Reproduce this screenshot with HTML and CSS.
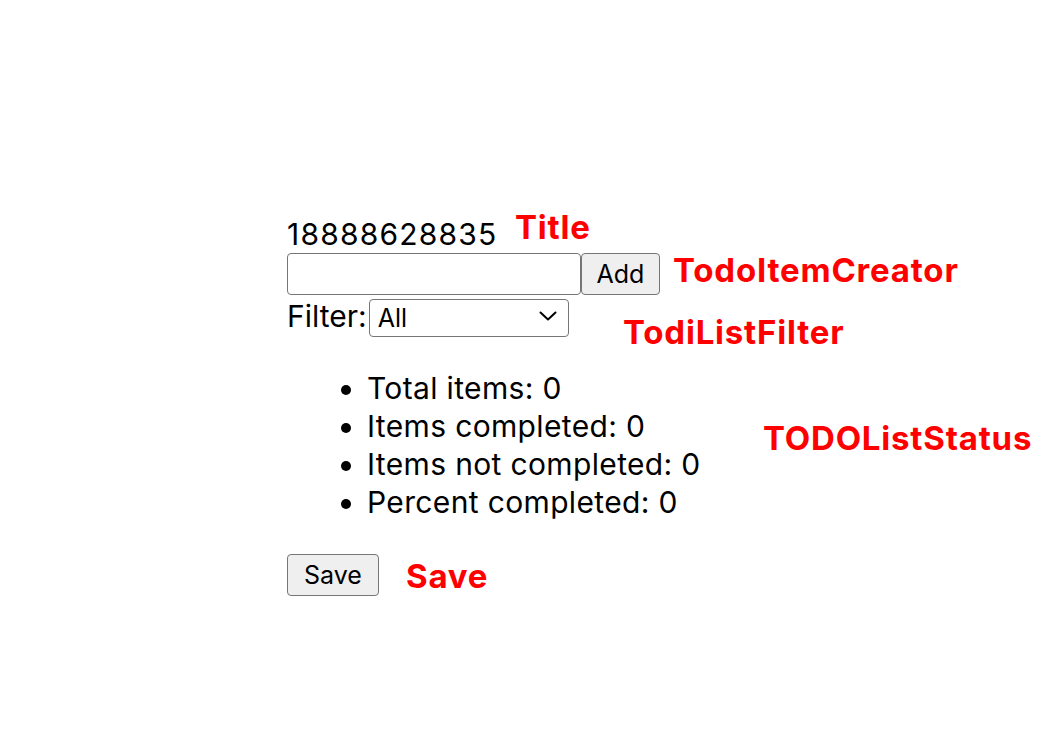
FILE: index.html
```html
<!DOCTYPE html>
<html>
<head>
<meta charset="utf-8">
<link rel="stylesheet" href="styles.css">
</head>
<body>
<div class="page">
  <div class="app">
    <div class="title">18888628835</div>
    <div class="creator">
      <input class="text-input" type="text">
      <button class="btn btn-add">Add</button>
    </div>
    <div class="filter">
      <span class="filter-label">Filter:</span>
      <span class="select-wrap">
        <select class="select">
          <option>All</option>
          <option>Completed</option>
          <option>Uncompleted</option>
        </select>
        <svg class="chevron" width="18" height="10" viewBox="0 0 18 10"><path d="M1.5 1.5 L9 8.5 L16.5 1.5" fill="none" stroke="#000" stroke-width="2" stroke-linecap="round" stroke-linejoin="round"/></svg>
      </span>
    </div>
    <ul class="status">
      <li>Total items: 0</li>
      <li>Items completed: 0</li>
      <li>Items not completed: 0</li>
      <li>Percent completed: 0</li>
    </ul>
    <button class="btn btn-save">Save</button>

    <span class="note note-title">Title</span>
    <span class="note note-creator">TodoItemCreator</span>
    <span class="note note-filter">TodiListFilter</span>
    <span class="note note-status">TODOListStatus</span>
    <span class="note note-save">Save</span>
  </div>
</div>
</body>
</html>
```

FILE: styles.css
```css
* { box-sizing: border-box; }
html, body { margin: 0; padding: 0; background: #fff; }
body {
  font-family: Inter, "Noto Sans", "Liberation Sans", sans-serif;
  color: #000;
}
.page {
  width: 1040px;
  height: 736px;
  padding: 215px 0 0 287px;
}
.app {
  position: relative;
  font-size: 30px;
  line-height: 38px;
}
.title {
  height: 38px;
  letter-spacing: 1.2px;
}
.creator {
  display: flex;
  height: 42px;
}
.text-input {
  width: 294px;
  height: 42px;
  border: 1px solid #767676;
  border-radius: 4px;
  background: #fff;
  font: inherit;
  font-size: 26px;
  padding: 0 6px;
  margin: 0;
}
.btn {
  height: 42px;
  border: 1px solid #767676;
  border-radius: 4px;
  background: #efefef;
  font-family: Inter, "Noto Sans", "Liberation Sans", sans-serif;
  font-size: 25px;
  color: #000;
  padding: 0;
  margin: 0;
}
.btn-add { width: 79px; }
.filter {
  display: flex;
  align-items: center;
  height: 38px;
  margin-top: 2px;
}
.select-wrap {
  position: relative;
  display: inline-block;
  margin-left: 2px;
  height: 38px;
}
.select {
  -webkit-appearance: none;
  appearance: none;
  width: 200px;
  height: 38px;
  border: 1px solid #767676;
  border-radius: 4px;
  background: #fff;
  font-family: Inter, "Noto Sans", "Liberation Sans", sans-serif;
  font-size: 25px;
  color: #000;
  padding: 0 0 0 8px;
  margin: 0;
}
.chevron {
  position: absolute;
  right: 12px;
  top: 14px;
  pointer-events: none;
}
.status {
  margin: 34px 0 0 0;
  padding: 0 0 0 80px;
  list-style: disc;
  letter-spacing: 0.35px;
}
.btn-save {
  display: block;
  width: 92px;
  margin-top: 33px;
}
.note {
  position: absolute;
  color: #ff0000;
  font-weight: 700;
  font-size: 33px;
  line-height: 40px;
  letter-spacing: 0.8px;
  white-space: nowrap;
}
.note-title { left: 228px; top: -8px; }
.note-creator { left: 386px; top: 35px; }
.note-filter { left: 336px; top: 97px; }
.note-status { left: 476px; top: 203px; }
.note-save { left: 119px; top: 341px; }
```
